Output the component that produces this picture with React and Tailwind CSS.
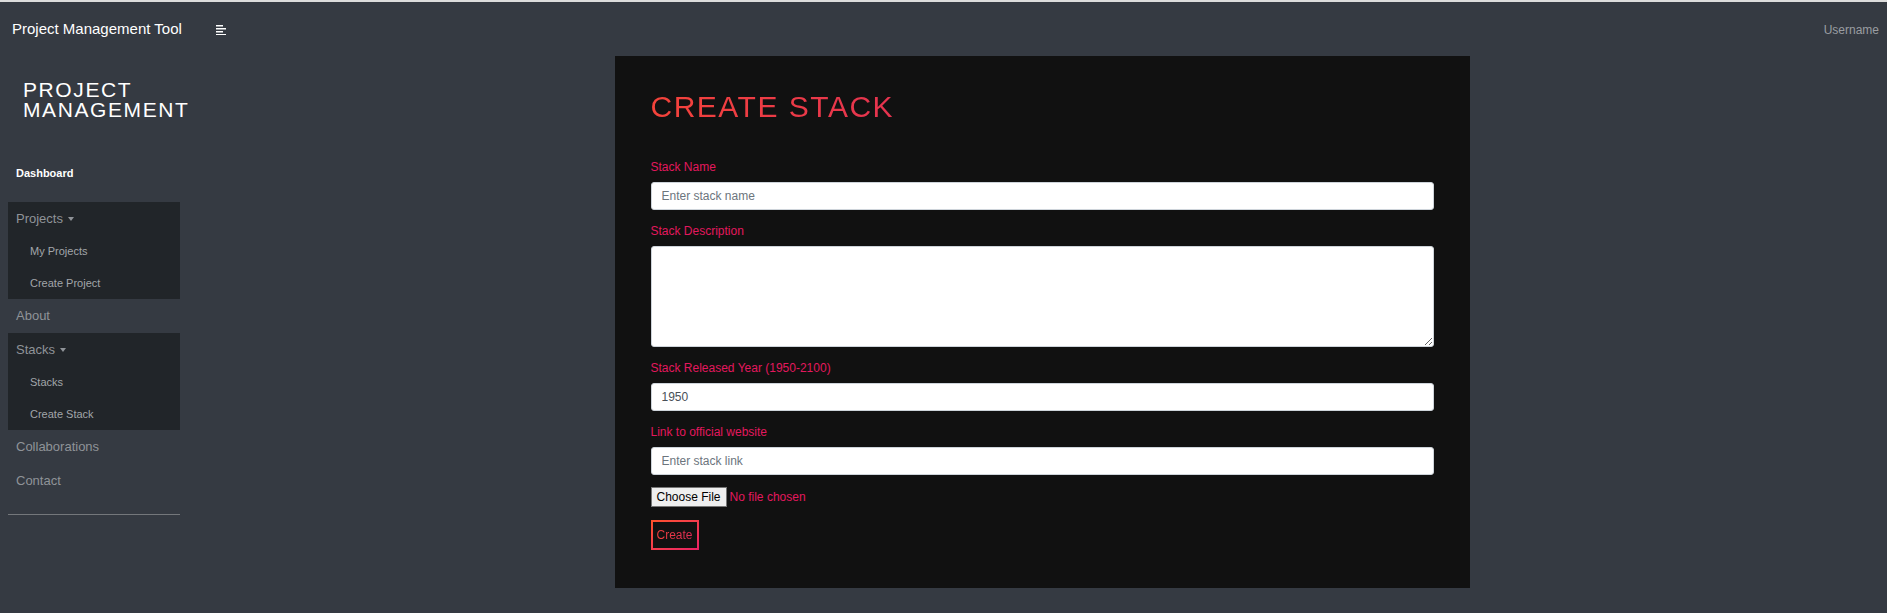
import React from 'react';

const Caret = () => (
  <span className="ml-[5px] inline-block h-0 w-0 border-x-[3px] border-t-[4px] border-x-transparent border-t-current align-middle" />
);

const SideGroup = ({ title, items }) => (
  <div className="w-[172px] bg-[#212529]">
    <div className="flex items-center px-2 py-2 text-[13px] leading-[18px] text-[#8f9398]">
      {title}
      <Caret />
    </div>
    {items.map((item, i) => (
      <div
        key={item}
        className={`pl-[22px] py-2 text-[11px] text-[#a2a6aa] ${i === items.length - 1 ? 'leading-4' : 'leading-[15px]'}`}
      >
        {item}
      </div>
    ))}
  </div>
);

const SideLink = ({ children }) => (
  <div className="flex h-[34px] items-center px-2 text-[13px] text-[#8f9398]">{children}</div>
);

const Field = ({ label, children }) => (
  <div className="mb-3">
    <label className="mb-1.5 block text-xs leading-[18px] text-[#e3185e]">{label}</label>
    {children}
  </div>
);

const inputClass =
  'block w-full h-7 rounded-[3px] border border-[#ced4da] bg-white px-2.5 text-xs text-[#495057] placeholder:text-[#6c757d] outline-none';

const App = () => {
  return (
    <div className="min-h-screen bg-[#353a42] font-['Liberation_Sans',Arial,sans-serif]">
      <div className="h-[2px] bg-[#dcdcdc]" />

      <nav className="flex h-[54px] items-center pl-3 pr-2">
        <span className="text-[15px] text-white">Project Management Tool</span>
        <button className="ml-[34px] text-white">
          <svg width="11" height="11" viewBox="0 0 11 11" fill="currentColor">
            <rect x="0" y="1" width="7" height="1.5" />
            <rect x="0" y="4" width="10" height="1.5" />
            <rect x="0" y="7" width="7" height="1.5" />
            <rect x="0" y="10" width="10" height="1" />
          </svg>
        </button>
        <span className="ml-auto pt-[2px] text-xs text-[#9a9da1]">Username</span>
      </nav>

      <div className="flex">
        <aside className="w-[197px] shrink-0 px-2 pt-6">
          <div className="pl-[15px] text-[21px] leading-5 tracking-[1.6px] text-white">
            PROJECT
            <br />
            MANAGEMENT
          </div>

          <div className="mt-9 flex h-[34px] items-center px-2 text-[11px] font-bold text-white">
            Dashboard
          </div>

          <div className="mt-3">
            <SideGroup title="Projects" items={['My Projects', 'Create Project']} />
            <SideLink>About</SideLink>
            <SideGroup title="Stacks" items={['Stacks', 'Create Stack']} />
            <SideLink>Collaborations</SideLink>
            <SideLink>Contact</SideLink>
          </div>

          <hr className="mt-4 w-[172px] border-t border-[#74777b]" />
        </aside>

        <main className="flex flex-1 justify-center">
          <div className="w-[855px] bg-[#111111] px-9 pt-[33px] pb-[38px]">
            <h1 className="mb-[33px] inline-block bg-linear-to-r from-[#f4433a] to-[#e5334f] bg-clip-text text-[30px] leading-9 tracking-[1.5px] text-transparent">
              CREATE STACK
            </h1>

            <form onSubmit={(e) => e.preventDefault()}>
              <Field label="Stack Name">
                <input type="text" placeholder="Enter stack name" className={inputClass} />
              </Field>

              <Field label="Stack Description">
                <textarea className="block h-[101px] w-full rounded-[3px] border border-[#ced4da] bg-white px-2.5 py-1 text-xs text-[#495057] outline-none" />
              </Field>

              <Field label="Stack Released Year (1950-2100)">
                <input type="number" defaultValue="1950" className={inputClass} />
              </Field>

              <Field label="Link to official website">
                <input type="text" placeholder="Enter stack link" className={inputClass} />
              </Field>

              <input
                type="file"
                className="mb-[13px] block text-xs leading-[18px] text-[#e3185e] file:mr-[3px] file:h-5 file:border file:border-[#767676] file:bg-[#efefef] file:px-[5px] file:text-black"
              />

              <div className="inline-block bg-linear-to-br from-[#ff5128] to-[#e91e63] p-[2px]">
                <button
                  type="submit"
                  className="block bg-[#111111] px-1 py-1 text-xs leading-[18px]"
                >
                  <span className="bg-linear-to-r from-[#f0403d] to-[#e02a55] bg-clip-text text-transparent">
                    Create
                  </span>
                </button>
              </div>
            </form>
          </div>
        </main>
      </div>
    </div>
  );
};

export default App;
